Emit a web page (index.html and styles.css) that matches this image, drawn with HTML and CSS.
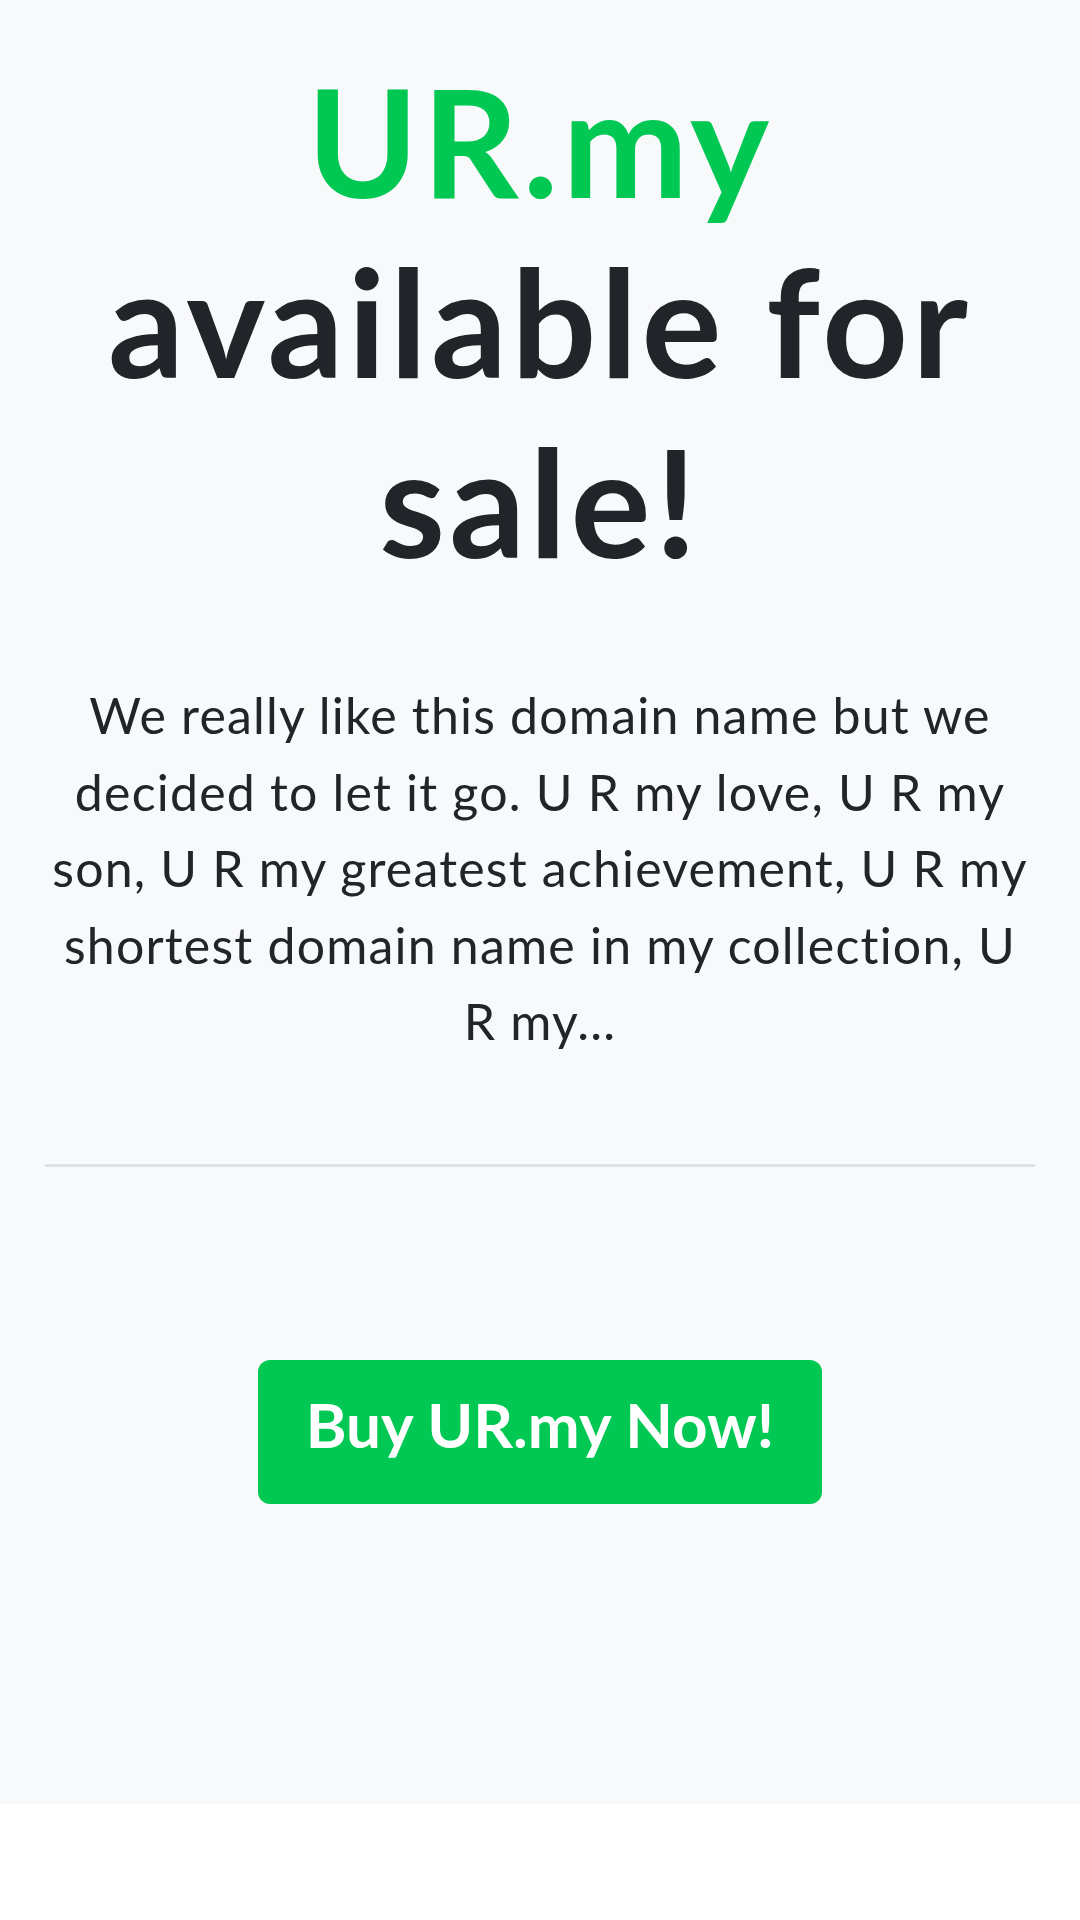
FILE: index.html
```html
<!DOCTYPE html>
<html lang="en">
<head>
    <meta charset="UTF-8">
    <meta name="viewport" content="width=device-width, initial-scale=1.0">
    <title>UR.my available for sale!</title>
    <link rel="stylesheet" href="styles.css">
</head>
<body>
    <main class="sale">
        <h1 class="sale-title">
            <span class="domain">UR.my</span>
            available for sale!
        </h1>
        <p class="sale-lead">We really like this domain name but we decided to let it go. U R my love, U R my son, U R my greatest achievement, U R my shortest domain name in my collection, U R my...</p>
        <hr class="divider">
        <div class="cta">
            <a class="btn-buy" href="#">Buy UR.my Now!</a>
        </div>
    </main>
</body>
</html>
```

FILE: styles.css
```css
body {
    margin: 0;
    background: #fff;
    font-family: Lato, "Noto Sans", sans-serif;
    color: #212529;
}
.sale {
    background: #f8f9fa;
    padding: 50px 45px 300px;
    text-align: center;
}
.sale-title {
    margin: 0;
    font-size: 150px;
    font-weight: 700;
    line-height: 180px;
    letter-spacing: 4px;
}
.domain {
    display: block;
    color: #00c853;
}
.sale-lead {
    margin: 87px 0 0;
    font-size: 50px;
    line-height: 76.5px;
    font-weight: 400;
    letter-spacing: 1.2px;
}
.divider {
    margin: 104px 0 0;
    border: 0;
    border-top: 3px solid #dee2e6;
}
.cta {
    padding-top: 193px;
}
.btn-buy {
    display: inline-block;
    width: 564px;
    box-sizing: border-box;
    padding: 26px 0 42px;
    background: #00c853;
    color: #fff;
    font-size: 62px;
    font-weight: 700;
    line-height: 76px;
    border-radius: 12px;
    text-decoration: none;
}
```
